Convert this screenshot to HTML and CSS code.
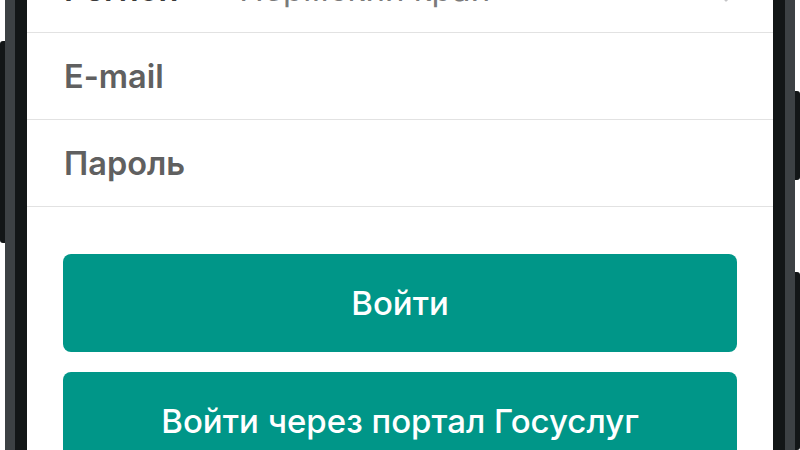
FILE: index.html
```html
<!DOCTYPE html>
<html lang="ru">
<head>
<meta charset="utf-8">
<title>Вход</title>
<link rel="stylesheet" href="styles.css">
</head>
<body>
<div class="device">
  <div class="edge edge-left">
    <div class="gap gap-l1"></div>
    <div class="side-btn side-btn-left"></div>
    <div class="gap gap-fill"></div>
  </div>
  <div class="bezel-gray"></div>
  <div class="bezel-black"></div>
  <main class="screen">
    <div class="list">
      <div class="row row-region">
        <span class="label label-dark">Регион</span>
        <span class="value">— Пермский край</span>
        <svg class="chevron" width="14" height="26" viewBox="0 0 14 26"><path d="M2 2 L11 13 L2 24" fill="none" stroke="#c4c4c6" stroke-width="3" stroke-linecap="round" stroke-linejoin="round"/></svg>
      </div>
      <div class="row"><span class="label">E-mail</span></div>
      <div class="row"><span class="label">Пароль</span></div>
    </div>
    <div class="actions">
      <button class="btn">Войти</button>
      <button class="btn">Войти через портал Госуслуг</button>
    </div>
  </main>
  <div class="bezel-black"></div>
  <div class="bezel-gray"></div>
  <div class="edge edge-right">
    <div class="gap gap-r1"></div>
    <div class="side-btn side-btn-right b1"></div>
    <div class="gap gap-r2"></div>
    <div class="side-btn side-btn-right b2"></div>
  </div>
</div>
</body>
</html>
```
FILE: styles.css
```css
html, body {
  margin: 0;
  padding: 0;
  width: 800px;
  height: 450px;
  overflow: hidden;
  background: #ffffff;
  font-family: "Inter", "Noto Sans", sans-serif;
}
.device {
  display: flex;
  width: 800px;
  height: 450px;
}
.edge {
  width: 5px;
  display: flex;
  flex-direction: column;
  flex-shrink: 0;
}
.gap { background: #ffffff; }
.gap-l1 { height: 41px; }
.gap-fill { flex: 1; }
.gap-r1 { height: 91px; }
.gap-r2 { height: 92px; }
.side-btn { background: #121617; }
.side-btn-left { height: 202px; border-radius: 3px 0 0 3px; }
.side-btn-right { border-radius: 0 3px 3px 0; }
.b1 { height: 89px; }
.b2 { flex: 1; }
.bezel-gray {
  width: 10px;
  background: #3c4144;
  flex-shrink: 0;
}
.bezel-black {
  width: 12px;
  background: #121617;
  flex-shrink: 0;
}
.screen {
  flex: 1;
  background: #ffffff;
  display: flex;
  flex-direction: column;
  overflow: hidden;
}
.list {
  margin-top: -54px;
  display: flex;
  flex-direction: column;
}
.row {
  height: 86px;
  border-bottom: 1px solid #e2e2e2;
  display: flex;
  align-items: center;
  padding: 0 37px;
}
.label {
  font-size: 32.5px;
  font-weight: 560;
  color: #606060;
}
.label-dark {
  color: #3a3a3a;
  font-weight: 600;
  width: 133px;
}
.value {
  font-size: 33px;
  font-weight: 400;
  color: #7a7a7a;
  flex: 1;
}
.chevron {
  margin-right: -2px;
}
.actions {
  margin-top: 47px;
  padding: 0 36px;
  display: flex;
  flex-direction: column;
  gap: 20px;
}
.btn {
  height: 98px;
  border: none;
  border-radius: 8px;
  background: #009688;
  color: #ffffff;
  font-family: "Inter", "Noto Sans", sans-serif;
  font-size: 33px;
  font-weight: 540;
  padding: 0;
  flex-shrink: 0;
}
```
